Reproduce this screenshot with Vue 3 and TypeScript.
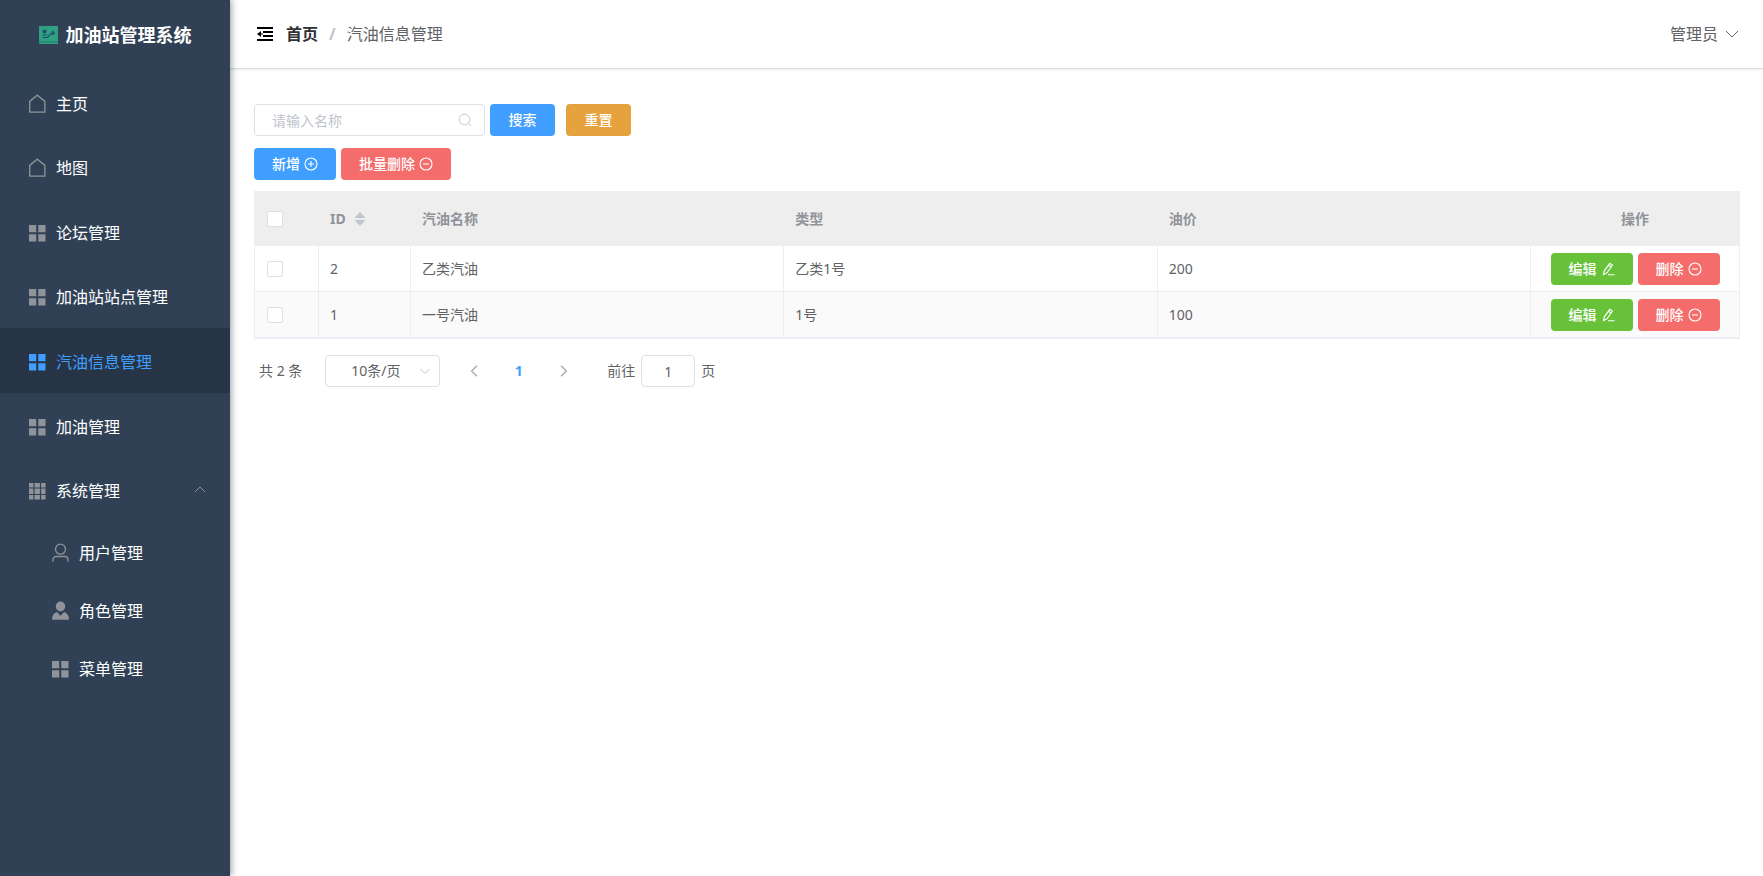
<script setup lang="ts">
import { ref, computed } from 'vue'

type IconName = 'home' | 'menu' | 'grid' | 'user' | 'userSolid'
interface MenuItem { label: string; icon: IconName }
interface Fuel { id: number; name: string; type: string; price: number }

const menus: MenuItem[] = [
  { label: '主页', icon: 'home' },
  { label: '地图', icon: 'home' },
  { label: '论坛管理', icon: 'menu' },
  { label: '加油站站点管理', icon: 'menu' },
  { label: '汽油信息管理', icon: 'menu' },
  { label: '加油管理', icon: 'menu' },
]
const subMenus: MenuItem[] = [
  { label: '用户管理', icon: 'user' },
  { label: '角色管理', icon: 'userSolid' },
  { label: '菜单管理', icon: 'menu' },
]
const active = ref('汽油信息管理')
const expanded = ref(true)
const keyword = ref('')
const pageSize = ref(10)
const page = ref('1')
const descending = ref(true)
const selected = ref<number[]>([])
const fuels = ref<Fuel[]>([
  { id: 2, name: '乙类汽油', type: '乙类1号', price: 200 },
  { id: 1, name: '一号汽油', type: '1号', price: 100 },
])
const rows = computed(() =>
  [...fuels.value].sort((a, b) => (descending.value ? b.id - a.id : a.id - b.id)),
)
const allSelected = computed({
  get: () => fuels.value.length > 0 && selected.value.length === fuels.value.length,
  set: (on: boolean) => { selected.value = on ? fuels.value.map(f => f.id) : [] },
})

const iconPaths: Record<IconName, string> = {
  home: 'M1.700 18.200V7.400L9.300 1.200L16.900 7.400V18.200Z',
  menu: 'M1 2h7.2v7.2H1zM10.3 2h7.2v7.2h-7.2zM1 11.3h7.2v7.2H1zM10.3 11.3h7.2v7.2h-7.2z',
  grid: 'M1 2h4.4v4.4H1zM6.6 2h5.3v4.4H6.6zM13.1 2h4.4v4.4h-4.4zM1 7.6h4.4v5.3H1zM6.6 7.6h5.3v5.3H6.6zM13.1 7.6h4.4v5.3h-4.4zM1 14.1h4.4v4.4H1zM6.6 14.1h5.3v4.4H6.6zM13.1 14.1h4.4v4.4h-4.4z',
  user: 'M9.5 1.2a5 5 0 1 1 0 10a5 5 0 1 1 0-10M2 18.8v-2.3a3 3 0 0 1 3-3h9a3 3 0 0 1 3 3v2.3',
  userSolid: 'M9.5 .6a4.7 4.7 0 0 1 4.7 4.7c0 2.7-1.8 5-4.7 5s-4.7-2.3-4.7-5A4.7 4.7 0 0 1 9.5 .6M6 11l3.5 3.8L13 11c3.3 1 5 3.8 5 7.8H1c0-4 1.7-6.800 5-7.800z',
}
const outlined = (name: IconName) => name === 'home' || name === 'user'
</script>

<template>
  <div class="layout">
    <aside class="sidebar">
      <div class="brand">
        <svg class="logo" viewBox="0 0 19 18" aria-hidden="true">
          <rect width="19" height="18" fill="#2fa083" />
          <path d="M0 16h19" stroke="#247c6b" />
          <circle cx="5.500" cy="5.500" r="2" fill="#25506a" />
          <path d="M3.500 9h4.500M3.500 11.500h5L12.500 7h2.500M13 5l2.300 2l-2.300 2" fill="none" stroke="#25506a" stroke-width="1.200" />
        </svg>
        <span>加油站管理系统</span>
      </div>
      <nav>
        <div class="menu">
          <a v-for="m in menus" :key="m.label" href="#" class="item" :class="{ active: m.label === active }" @click.prevent="active = m.label">
            <svg class="menu-icon" :class="{ outline: outlined(m.icon) }" viewBox="0 0 19 20" aria-hidden="true"><path :d="iconPaths[m.icon]" /></svg>
            <span>{{ m.label }}</span>
          </a>
          <button type="button" class="item" :aria-expanded="expanded" @click="expanded = !expanded">
            <svg class="menu-icon" viewBox="0 0 19 20" aria-hidden="true"><path :d="iconPaths.grid" /></svg>
            <span>系统管理</span>
            <svg class="fold" :class="{ closed: !expanded }" viewBox="0 0 12 12" aria-hidden="true"><path d="M1 7l5-5l5 5" /></svg>
          </button>
        </div>
        <div v-show="expanded" class="submenu">
          <a v-for="m in subMenus" :key="m.label" href="#" class="item" :class="{ active: m.label === active }" @click.prevent="active = m.label">
            <svg class="menu-icon" :class="{ outline: outlined(m.icon) }" viewBox="0 0 19 20" aria-hidden="true"><path :d="iconPaths[m.icon]" /></svg>
            <span>{{ m.label }}</span>
          </a>
        </div>
      </nav>
    </aside>

    <div class="body">
      <header class="topbar">
        <button type="button" class="plain collapse" aria-label="折叠菜单">
          <svg viewBox="0 0 17 16" aria-hidden="true"><path d="M1 2h16M7 6h10M7 10h10M1 14h16" stroke="#000" stroke-width="2.200" /><path d="M1 8l4-3v6z" /><path d="M4 8h3" stroke="#000" /></svg>
        </button>
        <nav class="crumbs" aria-label="当前位置">
          <a href="#">首页</a><span class="slash">/</span><span>汽油信息管理</span>
        </nav>
        <button type="button" class="plain account">
          管理员
          <svg viewBox="0 0 14 14" aria-hidden="true"><path d="M1 4l6 6l6-6" /></svg>
        </button>
      </header>

      <main>
        <form class="search" @submit.prevent>
          <div class="field">
            <input v-model="keyword" type="text" placeholder="请输入名称" aria-label="名称">
            <svg viewBox="0 0 14 14" aria-hidden="true"><circle cx="6.500" cy="6.500" r="5.300" /><path d="M10.500 10.500l2.500 2.500" /></svg>
          </div>
          <button type="submit" class="btn primary">搜索</button>
          <button type="button" class="btn warning" @click="keyword = ''">重置</button>
        </form>

        <div class="actions">
          <button type="button" class="btn primary">新增 <svg viewBox="0 0 14 14" aria-hidden="true"><circle cx="7" cy="7" r="6" /><path d="M4 7h6M7 4v6" /></svg></button>
          <button type="button" class="btn danger">批量删除 <svg viewBox="0 0 14 14" aria-hidden="true"><circle cx="7" cy="7" r="6" /><path d="M4 7h6" /></svg></button>
        </div>

        <table>
          <colgroup><col class="c-check"><col class="c-id"><col><col><col><col class="c-op"></colgroup>
          <thead>
            <tr>
              <th class="check"><input v-model="allSelected" type="checkbox" aria-label="全选"></th>
              <th>
                <button type="button" class="plain sort" @click="descending = !descending">
                  ID
                  <svg viewBox="0 0 12 14" aria-hidden="true"><path d="M6 0l5.500 6H.5zM6 14l5.500-6H.5z" /></svg>
                </button>
              </th>
              <th>汽油名称</th>
              <th>类型</th>
              <th>油价</th>
              <th class="op">操作</th>
            </tr>
          </thead>
          <tbody>
            <tr v-for="f in rows" :key="f.id">
              <td class="check"><input v-model="selected" type="checkbox" :value="f.id" :aria-label="f.name"></td>
              <td>{{ f.id }}</td>
              <td>{{ f.name }}</td>
              <td>{{ f.type }}</td>
              <td>{{ f.price }}</td>
              <td class="op">
                <div class="ops">
                  <button type="button" class="btn success">编辑 <svg viewBox="0 0 14 14" aria-hidden="true"><path d="M2.500 12.500l.8-3.700L8.800 1.300l2.600 1.900L6 10.800zM7.500 3.200l2.600 1.900M7 12.800h6.500" /></svg></button>
                  <button type="button" class="btn danger">删除 <svg viewBox="0 0 14 14" aria-hidden="true"><circle cx="7" cy="7" r="6" /><path d="M4 7h6" /></svg></button>
                </div>
              </td>
            </tr>
          </tbody>
        </table>

        <div class="pager">
          <span>共 {{ fuels.length }} 条</span>
          <div class="size">
            <select v-model="pageSize" aria-label="每页条数">
              <option :value="10">10条/页</option>
              <option :value="20">20条/页</option>
            </select>
            <svg viewBox="0 0 12 12" aria-hidden="true"><path d="M1.500 4l4.500 4.500l4.500-4.500" /></svg>
          </div>
          <div class="pages">
            <button type="button" class="plain" aria-label="上一页"><svg viewBox="0 0 12 12" aria-hidden="true"><path d="M8.500 1.500L4 6l4.500 4.500" /></svg></button>
            <button type="button" class="plain current">1</button>
            <button type="button" class="plain" aria-label="下一页"><svg viewBox="0 0 12 12" aria-hidden="true"><path d="M3.500 1.500l4.500 4.500l-4.500 4.500" /></svg></button>
          </div>
          <label class="jump">前往 <input v-model="page" type="text" inputmode="numeric"> 页</label>
        </div>
      </main>
    </div>
  </div>
</template>

<style>
body { margin: 0; }
</style>

<style scoped>
.layout {
  display: flex;
  min-height: 100vh;
  background: #fff;
  color: #606266;
  font: 14px/20px "Noto Sans", "Noto Sans CJK SC", sans-serif;
}
* { box-sizing: border-box; }
button, input, select { font: inherit; color: inherit; }
button { cursor: pointer; }
a { color: inherit; text-decoration: none; }
svg { display: block; flex: none; }
.plain { border: 0; padding: 0; background: none; }

.sidebar {
  z-index: 1;
  flex: none;
  width: 230px;
  background: #304156;
  box-shadow: 2px 0 6px rgba(0, 21, 41, .35);
}
.brand {
  display: flex;
  align-items: center;
  justify-content: center;
  gap: 8px;
  height: 70px;
  color: #fff;
  font-size: 18px;
  font-weight: 700;
}
.logo { width: 19px; height: 18px; }
.menu { display: grid; grid-auto-rows: 1fr; height: 452px; }
.item {
  display: flex;
  align-items: center;
  gap: 9px;
  width: 100%;
  padding: 3px 24px 0 28px;
  border: 0;
  background: none;
  color: #fff;
  font-size: 16px;
  text-align: left;
}
.submenu .item { height: 58px; padding-left: 51px; }
.item.active { background: #263445; color: #409eff; }
.menu-icon { width: 19px; height: 20px; fill: #909399; }
.menu-icon.outline { fill: none; stroke: #909399; stroke-width: 1.3; }
.active .menu-icon { fill: #409eff; }
.active .menu-icon.outline { fill: none; stroke: #409eff; }
.fold { width: 12px; height: 12px; margin-left: auto; fill: none; stroke: #909399; }
.fold.closed { transform: rotate(180deg); }

.body { flex: 1; min-width: 0; }
.topbar {
  display: flex;
  align-items: center;
  height: 69px;
  padding: 0 24px 0 26px;
  border-bottom: 1px solid #d8dce5;
  box-shadow: 0 1px 2px rgba(0, 0, 0, .08);
  font-size: 16px;
}
.collapse svg { width: 17px; height: 16px; }
.crumbs { display: flex; margin-left: 13px; }
.crumbs a { color: #303133; font-weight: 700; }
.slash { margin: 0 11px; color: #c0c4cc; font-weight: 700; }
.account { display: flex; align-items: center; gap: 7px; margin-left: auto; }
.account svg { width: 14px; height: 14px; fill: none; stroke: #606266; }

main { padding: 35px 23px 24px 24px; }
.search, .actions { display: flex; gap: 5px; }
.search { margin-bottom: 12px; }
.field { position: relative; width: 231px; }
.field input {
  width: 100%;
  height: 32px;
  padding: 0 34px 0 17px;
  border: 1px solid #dcdfe6;
  border-radius: 4px;
  outline: none;
  background: #fff;
}
.field input::placeholder { color: #c0c4cc; opacity: 1; }
.field svg { position: absolute; right: 13px; top: 9px; width: 14px; height: 14px; fill: none; stroke: #c0c4cc; }
.btn {
  display: flex;
  align-items: center;
  justify-content: center;
  gap: 4px;
  min-width: 65px;
  height: 32px;
  padding: 0 18px;
  border: 0;
  border-radius: 4px;
  color: #fff;
  font-weight: 500;
}
.btn svg { width: 14px; height: 14px; fill: none; stroke: #fff; stroke-width: 1.1; }
.primary { background: #409eff; }
.warning { margin-left: 6px; background: #e6a23c; }
.danger { background: #f56c6c; }
.success { background: #67c23a; }

table {
  width: 100%;
  margin-top: 11px;
  border: 1px solid #ebeef5;
  border-collapse: separate;
  border-spacing: 0;
  table-layout: fixed;
}
.c-check { width: 64px; }
.c-id { width: 92px; }
.c-op { width: 208px; }
th { height: 54px; padding: 0 11px; background: #eee; color: #909399; font-weight: 700; text-align: left; }
td { height: 46px; padding: 0 11px; border-right: 1px solid #ebeef5; border-bottom: 1px solid #ebeef5; }
td:last-child { border-right: 0; }
.check { padding: 0 12px; }
tbody tr:nth-child(even) { background: #fafafa; }
.op { text-align: center; }
.ops { display: flex; justify-content: center; gap: 5px; }
input[type="checkbox"] {
  display: block;
  width: 16px;
  height: 16px;
  margin: 0;
  appearance: none;
  border: 1px solid #dcdfe6;
  border-radius: 2px;
  background: #fff;
}
input[type="checkbox"]:checked { border-color: #409eff; background: #409eff; }
.sort { display: flex; align-items: center; gap: 8px; }
.sort svg { width: 12px; height: 14px; fill: #c0c4cc; }

.pager { display: flex; align-items: center; margin-top: 16px; padding-left: 5px; }
.size { position: relative; width: 115px; margin-left: 23px; }
.size select {
  display: block;
  width: 100%;
  height: 32px;
  padding: 0 22px 0 8px;
  appearance: none;
  border: 1px solid #dcdfe6;
  border-radius: 4px;
  background: #fff;
  text-align: center;
  text-align-last: center;
}
.size svg { position: absolute; right: 9px; top: 10px; width: 12px; height: 12px; fill: none; stroke: #c0c4cc; }
.pages { display: flex; margin-left: 11px; }
.pages button { display: flex; align-items: center; justify-content: center; width: 45px; height: 32px; }
.pages svg { width: 14px; height: 14px; fill: none; stroke: #a8abb2; stroke-width: 1.2; }
.pages .current { color: #409eff; font-weight: 700; }
.jump { display: flex; align-items: center; gap: 6px; margin-left: 21px; }
.jump input { width: 54px; height: 32px; padding: 0; border: 1px solid #dcdfe6; border-radius: 4px; background: #fff; text-align: center; }
</style>
